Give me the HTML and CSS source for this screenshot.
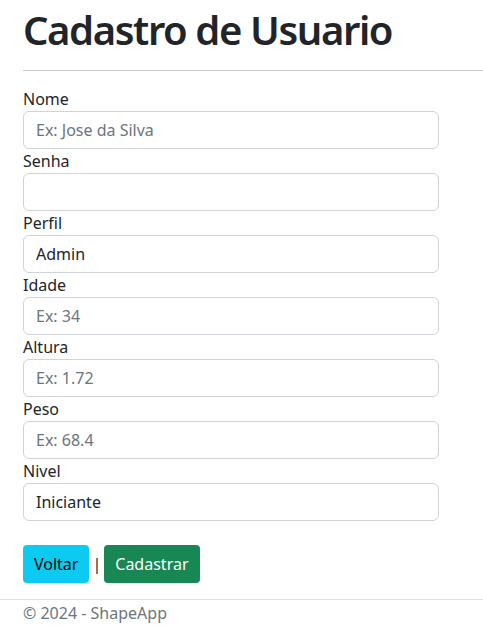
FILE: index.html
```html
<!DOCTYPE html>
<html lang="pt">
<head>
<meta charset="utf-8">
<title>Cadastro de Usuario</title>
<link rel="stylesheet" href="styles.css">
</head>
<body>
<main class="page">
  <h1 class="title">Cadastro de Usuario</h1>
  <hr class="rule">
  <form class="form">
    <div class="field">
      <label class="label" for="nome">Nome</label>
      <input class="input" id="nome" type="text" placeholder="Ex: Jose da Silva">
    </div>
    <div class="field">
      <label class="label" for="senha">Senha</label>
      <input class="input" id="senha" type="password">
    </div>
    <div class="field">
      <label class="label" for="perfil">Perfil</label>
      <input class="input" id="perfil" type="text" value="Admin">
    </div>
    <div class="field">
      <label class="label" for="idade">Idade</label>
      <input class="input" id="idade" type="text" placeholder="Ex: 34">
    </div>
    <div class="field">
      <label class="label" for="altura">Altura</label>
      <input class="input" id="altura" type="text" placeholder="Ex: 1.72">
    </div>
    <div class="field">
      <label class="label" for="peso">Peso</label>
      <input class="input" id="peso" type="text" placeholder="Ex: 68.4">
    </div>
    <div class="field">
      <label class="label" for="nivel">Nivel</label>
      <select class="input select" id="nivel"><option>Iniciante</option></select>
    </div>
    <div class="actions">
      <a class="btn btn-info" href="#">Voltar</a>
      <span class="sep">|</span>
      <button class="btn btn-success" type="button">Cadastrar</button>
    </div>
  </form>
</main>
<footer class="footer">© 2024 - ShapeApp</footer>
</body>
</html>
```
FILE: styles.css
```css
* { box-sizing: border-box; }
html, body { margin: 0; padding: 0; }
body {
  font-family: "Noto Sans", "Open Sans", sans-serif;
  font-size: 16px;
  line-height: 1.5;
  color: #212529;
  background: #fff;
  overflow: hidden;
}
.page {
  padding: 6px 0 0 23px;
}
.title {
  margin: 0 0 8px;
  font-size: 40px;
  line-height: 1.2;
  font-weight: 600;
  letter-spacing: -1.4px;
}
.rule {
  margin: 16px 0 16px;
  border: 0;
  border-top: 1px solid #c8c9ca;
}
.form { width: 416px; }
.field { display: flex; flex-direction: column; }
.label { display: block; line-height: 24px; }
.input {
  display: block;
  width: 100%;
  height: 38px;
  padding: 6px 12px;
  font: inherit;
  color: #212529;
  border: 1px solid #ced4da;
  border-radius: 6px;
  background: #fff;
  appearance: none;
  outline: none;
}
.input::placeholder { color: #6c757d; }
.actions {
  display: flex;
  align-items: center;
  gap: 3px;
  margin-top: 24px;
}
.btn {
  display: inline-block;
  padding: 6px 10px;
  font: inherit;
  line-height: 24px;
  border: 1px solid transparent;
  border-radius: 4px;
  text-decoration: none;
  cursor: pointer;
}
.btn-info { background: #0dcaf0; color: #000; }
.btn-success { background: #198754; color: #fff; }
.sep { color: #212529; }
.footer {
  margin-top: 16px;
  border-top: 1px solid #dee2e6;
  padding: 1px 23px 0;
  color: #6c757d;
  line-height: 24px;
}
```
